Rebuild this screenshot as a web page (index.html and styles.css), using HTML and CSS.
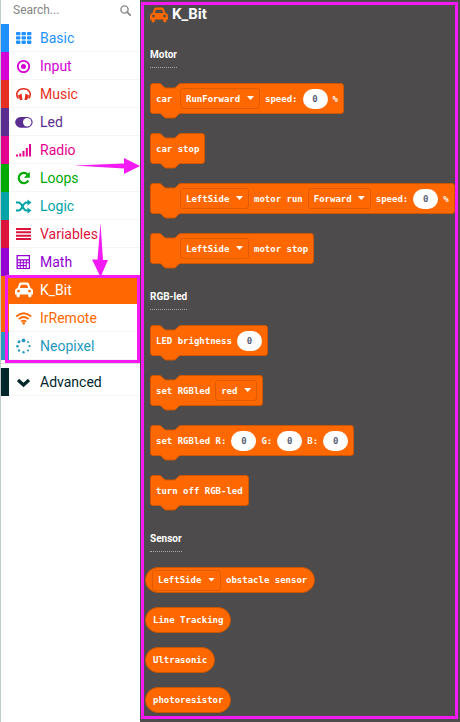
FILE: index.html
```html
<!DOCTYPE html>
<html lang="en">
<head>
<meta charset="utf-8">
<meta name="viewport" content="width=device-width, initial-scale=1">
<title>K_Bit blocks</title>
<link rel="stylesheet" href="styles.css">
</head>
<body>
<svg class="defs" aria-hidden="true">
  <symbol id="car" viewBox="0 0 18 16"><path fill-rule="evenodd" d="M4.2 1.5Q4.7 0.500 6 .5h6q1.300 0 1.800 1L15.500 6Q18 6.500 18 9v3.500h-1.500v1.300a1.600 1.600 0 0 1-3.300 0v-1.300H4.800v1.300a1.600 1.600 0 0 1-3.300 0v-1.300H0V9q0-2.500 2.500-3zM6 2.700 4.800 6h8.400L12 2.700zM3.500 7.700a1.400 1.400 0 1 0 0 2.800 1.400 1.400 0 0 0 0-2.800zm11 0a1.400 1.400 0 1 0 0 2.800 1.400 1.400 0 0 0 0-2.800z"/></symbol>
  <symbol id="notch" viewBox="0 0 22 6"><path class="fill" d="M0 0h22v.5c-1.500 0-2 .5-3 1.500l-2 2q-1 1-2 1H7Q6 5 5 4L3 2C2 1 1.500.5 0 .5z"/><path class="edge" d="M0 .5c1.500 0 2 .5 3 1.500l2 2q1 1 2 1h8q1 0 2-1l2-2c1-1 1.500-1.500 3-1.500"/></symbol>
</svg>
<div class="editor">
  <aside class="toolbox">
    <label class="search">
      <input type="search" placeholder="Search..." aria-label="Search blocks">
      <svg width="11" height="11" viewBox="0 0 11 11"><circle cx="4.500" cy="4.500" r="3.600" fill="none" stroke="#888" stroke-width="1.400"/><path d="M7.200 7.200l3 3" stroke="#888" stroke-width="1.800" stroke-linecap="round"/></svg>
    </label>
    <nav>
      <a href="#" class="row basic"><svg class="icon" viewBox="0 0 18 16"><g fill="currentColor"><rect x="1" y="2" width="4.400" height="3.300" rx=".8"/><rect x="6.500" y="2" width="4.400" height="3.300" rx=".8"/><rect x="12" y="2" width="4.400" height="3.300" rx=".8"/><rect x="1" y="6.300" width="4.400" height="3.300" rx=".8"/><rect x="6.500" y="6.300" width="4.400" height="3.300" rx=".8"/><rect x="12" y="6.300" width="4.400" height="3.300" rx=".8"/><rect x="1" y="10.600" width="4.400" height="3.300" rx=".8"/><rect x="6.500" y="10.600" width="4.400" height="3.300" rx=".8"/><rect x="12" y="10.600" width="4.400" height="3.300" rx=".8"/></g></svg>Basic</a>
      <a href="#" class="row input"><svg class="icon" viewBox="0 0 18 16"><circle cx="8.500" cy="8.500" r="5.700" fill="none" stroke="currentColor" stroke-width="1.800"/><circle cx="8.500" cy="8.500" r="2.500" fill="currentColor"/></svg>Input</a>
      <a href="#" class="row music"><svg class="icon" viewBox="0 0 18 16"><path d="M3.300 12.500C-.5 7 3.500 2.800 8.500 2.800S17.500 7 13.700 12.500" fill="none" stroke="currentColor" stroke-width="1.600"/><path d="M3 9.500l3.500-2 1 6.500H5zM14 9.500l-3.500-2-1 6.500H12z" fill="currentColor"/></svg>Music</a>
      <a href="#" class="row led"><svg class="icon" viewBox="0 0 18 16"><rect x=".2" y="2.900" width="17.400" height="10.800" rx="5.400" fill="currentColor"/><circle cx="12.200" cy="8.300" r="4.200" fill="#fff"/></svg>Led</a>
      <a href="#" class="row radio"><svg class="icon" viewBox="0 0 18 16"><path d="M1 12.500h2v2H1zM4.300 11.500h2v3h-2zM7.500 9h2v5.500h-2zM10.800 6h2v8.500h-2zM14 2h2v12.500h-2z" fill="currentColor"/></svg>Radio</a>
      <a href="#" class="row loops"><svg class="icon" viewBox="0 0 18 16"><path d="M12.500 4.500A5.100 5.100 0 1 0 13.300 10.500" fill="none" stroke="currentColor" stroke-width="2.200"/><path d="M14.800 1.700v6h-6z" fill="currentColor"/></svg>Loops</a>
      <a href="#" class="row logic"><svg class="icon" viewBox="0 0 18 16"><path d="M1 4.500h2.500c4 0 4 8 8 8H13M1 12.500h2.500c4 0 4-8 8-8H13" fill="none" stroke="currentColor" stroke-width="1.900"/><path d="M12.500 1.500l4 3-4 3zM12.500 9.500l4 3-4 3z" fill="currentColor"/></svg>Logic</a>
      <a href="#" class="row variables"><svg class="icon" viewBox="0 0 18 16"><path d="M1 2h15v2H1zM1 5.300h15v2H1zM1 8.700h15v2H1zM1 12h15v2H1z" fill="currentColor"/></svg>Variables</a>
      <a href="#" class="row math"><svg class="icon" viewBox="0 0 18 16"><path fill-rule="evenodd" d="M1.500 1h13.500v14H1.500zM2.800 2.300v3h11v-3zM2.800 6.500v1.800h2V6.500zm3 0v1.800h2V6.500zm3 0v1.800h2V6.500zm3 0v1.800h2V6.500zM2.800 9.300v1.800h2V9.300zm3 0v1.800h2V9.300zm3 0v1.800h2V9.300zm3 0v4.700h2V9.300zm-9 2.900v1.800h2v-1.800zm3 0v1.800h2v-1.800zm3 0v1.800h2v-1.800z" fill="currentColor"/></svg>Math</a>
      <a href="#" class="row kbit" aria-current="true"><svg class="icon" fill="currentColor"><use href="#car"/></svg>K_Bit</a>
      <a href="#" class="row irremote"><svg class="icon" viewBox="0 0 18 16"><g fill="none" stroke="currentColor" stroke-width="1.800"><path d="M1.200 6.500q7.500-6.500 15 0M3.800 9.200q4.900-4.400 9.800 0M6.200 11.700q2.500-2.200 5 0"/></g><circle cx="8.700" cy="13.200" r="1.300" fill="currentColor"/></svg>IrRemote</a>
      <a href="#" class="row neopixel"><svg class="icon" viewBox="0 0 18 16"><g fill="currentColor"><circle cx="8.500" cy="2.400" r="1.900"/><circle cx="13" cy="4" r="1"/><circle cx="14.500" cy="8.200" r="1.100"/><circle cx="13" cy="12.500" r="1.100"/><circle cx="8.500" cy="14.200" r="1.200"/><circle cx="4" cy="12.500" r="1.200"/><circle cx="2.500" cy="8.200" r="1.300"/><circle cx="4" cy="3.800" r="1.500"/></g></svg>Neopixel</a>
      <a href="#" class="row advanced"><svg class="icon" viewBox="0 0 18 16"><path d="M3 6l5.500 5L14 6" fill="none" stroke="currentColor" stroke-width="3.200"/></svg>Advanced</a>
    </nav>
    <div class="highlight"></div>
    <svg class="pointer pointer-right" width="66" height="16" viewBox="0 0 66 16"><path d="M0 7.500l50-2V0l16 8-16 8v-5.500z"/></svg>
    <svg class="pointer pointer-down" width="16" height="54" viewBox="0 0 16 54"><path d="M8.500 0l2.500 37h5L8.500 54 0 36.500h5.500z"/></svg>
  </aside>
  <main class="flyout">
    <h1><svg width="18" height="16" fill="#ff6800"><use href="#car"/></svg>K_Bit</h1>
    <section>
      <h2>Motor</h2>
      <div class="blocks">
        <div class="block"><svg class="notch top"><use href="#notch"/></svg><span class="lead">car</span><span class="drop"><select aria-label="Car direction"><option>RunForward</option></select></span><span>speed:</span><input aria-label="Car speed" value="0"><span>%</span><svg class="notch bottom"><use href="#notch"/></svg></div>
        <div class="block"><svg class="notch top"><use href="#notch"/></svg><span class="lead">car stop</span><svg class="notch bottom"><use href="#notch"/></svg></div>
        <div class="block"><svg class="notch top"><use href="#notch"/></svg><span class="lead"></span><span class="drop"><select aria-label="Motor side"><option>LeftSide</option></select></span><span>motor run</span><span class="drop"><select aria-label="Motor direction"><option>Forward</option></select></span><span>speed:</span><input aria-label="Motor speed" value="0"><span>%</span><svg class="notch bottom"><use href="#notch"/></svg></div>
        <div class="block"><svg class="notch top"><use href="#notch"/></svg><span class="lead"></span><span class="drop"><select aria-label="Motor to stop"><option>LeftSide</option></select></span><span>motor stop</span><svg class="notch bottom"><use href="#notch"/></svg></div>
      </div>
    </section>
    <section>
      <h2>RGB-led</h2>
      <div class="blocks">
        <div class="block"><svg class="notch top"><use href="#notch"/></svg><span class="lead">LED brightness</span><input aria-label="LED brightness" value="0"><svg class="notch bottom"><use href="#notch"/></svg></div>
        <div class="block"><svg class="notch top"><use href="#notch"/></svg><span class="lead">set RGBled</span><span class="drop"><select aria-label="LED colour"><option>red</option></select></span><svg class="notch bottom"><use href="#notch"/></svg></div>
        <div class="block"><svg class="notch top"><use href="#notch"/></svg><span class="lead">set RGBled R:</span><input aria-label="Red" value="0"><span>G:</span><input aria-label="Green" value="0"><span>B:</span><input aria-label="Blue" value="0"><svg class="notch bottom"><use href="#notch"/></svg></div>
        <div class="block"><svg class="notch top"><use href="#notch"/></svg><span class="lead">turn off RGB-led</span><svg class="notch bottom"><use href="#notch"/></svg></div>
      </div>
    </section>
    <section>
      <h2>Sensor</h2>
      <div class="blocks reporters">
        <div class="block reporter"><span class="drop"><select aria-label="Sensor side"><option>LeftSide</option></select></span><span>obstacle sensor</span></div>
        <div class="block reporter"><span>Line Tracking</span></div>
        <div class="block reporter"><span>Ultrasonic</span></div>
        <div class="block reporter"><span>photoresistor</span></div>
      </div>
    </section>
  </main>
</div>
</body>
</html>
```
FILE: styles.css
```css
* { box-sizing: border-box; }

body {
  margin: 0;
  background: #4d4b4b;
  font-family: Roboto, "Liberation Sans", sans-serif;
}

.defs { position: absolute; width: 0; height: 0; }

.editor { display: flex; min-height: 100vh; }

/* Toolbox */
.toolbox {
  position: relative;
  flex: 0 0 140px;
  min-width: 0;
  background: #fff;
  border-left: 1px solid #c3cccc;
}

.search {
  display: flex;
  align-items: center;
  height: 24px;
  padding: 0 9px 4px 12px;
}

.search input {
  flex: 1;
  min-width: 0;
  padding: 0;
  border: 0;
  outline: 0;
  background: none;
  font: 12px Roboto, sans-serif;
  appearance: none;
}

.search input::placeholder { color: #858585; }

.row {
  display: flex;
  align-items: center;
  gap: 7px;
  height: 28px;
  padding-left: 6px;
  border-left: 8px solid var(--c);
  color: var(--c);
  font-size: 14px;
  text-decoration: none;
  box-shadow: inset 0 -1px #f5f5f5;
}

.icon { width: 18px; height: 16px; }

.basic { --c: #1e90ff; }
.input { --c: #d400d4; }
.music { --c: #e63022; }
.led { --c: #5c2d91; }
.radio { --c: #e3008c; }
.loops { --c: #00aa00; }
.logic { --c: #00a4a6; }
.variables { --c: #dc143c; }
.math { --c: #9400d3; }
.kbit { --c: #ff6800; background: var(--c); color: #fff; box-shadow: none; }
.irremote { --c: #ff6800; }
.neopixel { --c: #2699bf; }
.advanced { --c: #00272b; margin-top: 8px; box-shadow: inset 0 -1px #f5f5f5, 0 -4px #fff, 0 -5px #ddd; }

/* Callouts */
.highlight {
  position: absolute;
  top: 275px;
  left: 4px;
  right: 0;
  height: 88px;
  border: 3px solid #f31af3;
}

.pointer { position: absolute; fill: #f31af3; }
.pointer-right { top: 158px; right: 0; }
.pointer-down { top: 223px; left: 91px; }

/* Flyout */
.flyout {
  flex: 1;
  min-width: 0;
  margin: 2px 2px 3px 1px;
  padding: 0 3px 0 6px;
  border: 3px solid #f31af3;
}

h1 {
  display: flex;
  align-items: center;
  gap: 4px;
  margin: 0 0 24px;
  color: #fff;
  font-size: 15px;
  line-height: 19px;
}

section + section { margin-top: 26px; }

h2 {
  width: fit-content;
  margin: 0 0 15px;
  padding-bottom: 5px;
  border-bottom: 1px dotted #aaa;
  color: #fff;
  font-size: 10px;
  line-height: 14px;
}

.blocks {
  display: flex;
  flex-direction: column;
  align-items: flex-start;
  gap: 19px;
}

.block {
  position: relative;
  display: flex;
  align-items: center;
  gap: 5px;
  height: 31px;
  padding: 0 5px;
  border: 1px solid #cc5500;
  border-radius: 3px;
  background: #ff6800;
  color: #fff;
  font: bold 9px "DejaVu Sans Mono", monospace;
  white-space: nowrap;
}

.lead { min-width: 19px; }

.notch { position: absolute; left: 8px; width: 22px; height: 6px; }
.notch.top { top: -1px; fill: #4d4b4b; }
.notch.bottom { bottom: -6px; fill: #ff6800; }
#notch .fill { fill: inherit; }
#notch .edge { fill: none; stroke: #cc5500; }

.drop { position: relative; display: flex; }

.drop::after {
  content: "";
  position: absolute;
  top: 8px;
  right: 6px;
  width: 7px;
  height: 4px;
  background: #fff;
  clip-path: polygon(0 0, 100% 0, 50% 100%);
  pointer-events: none;
}

.drop select {
  height: 21px;
  margin: 0;
  padding: 0 18px 0 5px;
  border: 1px solid #e05c00;
  border-radius: 3px;
  background: none;
  color: inherit;
  font: inherit;
  appearance: none;
}

.block input {
  width: 25px;
  height: 20px;
  padding: 0;
  border: 0;
  border-radius: 10px;
  background: #fff;
  color: #575e75;
  font: inherit;
  text-align: center;
}

.reporters { gap: 14px; margin-left: -5px; }
.reporter { height: 26px; padding: 0 7px; border-radius: 13px; }
.reporter .drop { margin-left: -1px; }
```
